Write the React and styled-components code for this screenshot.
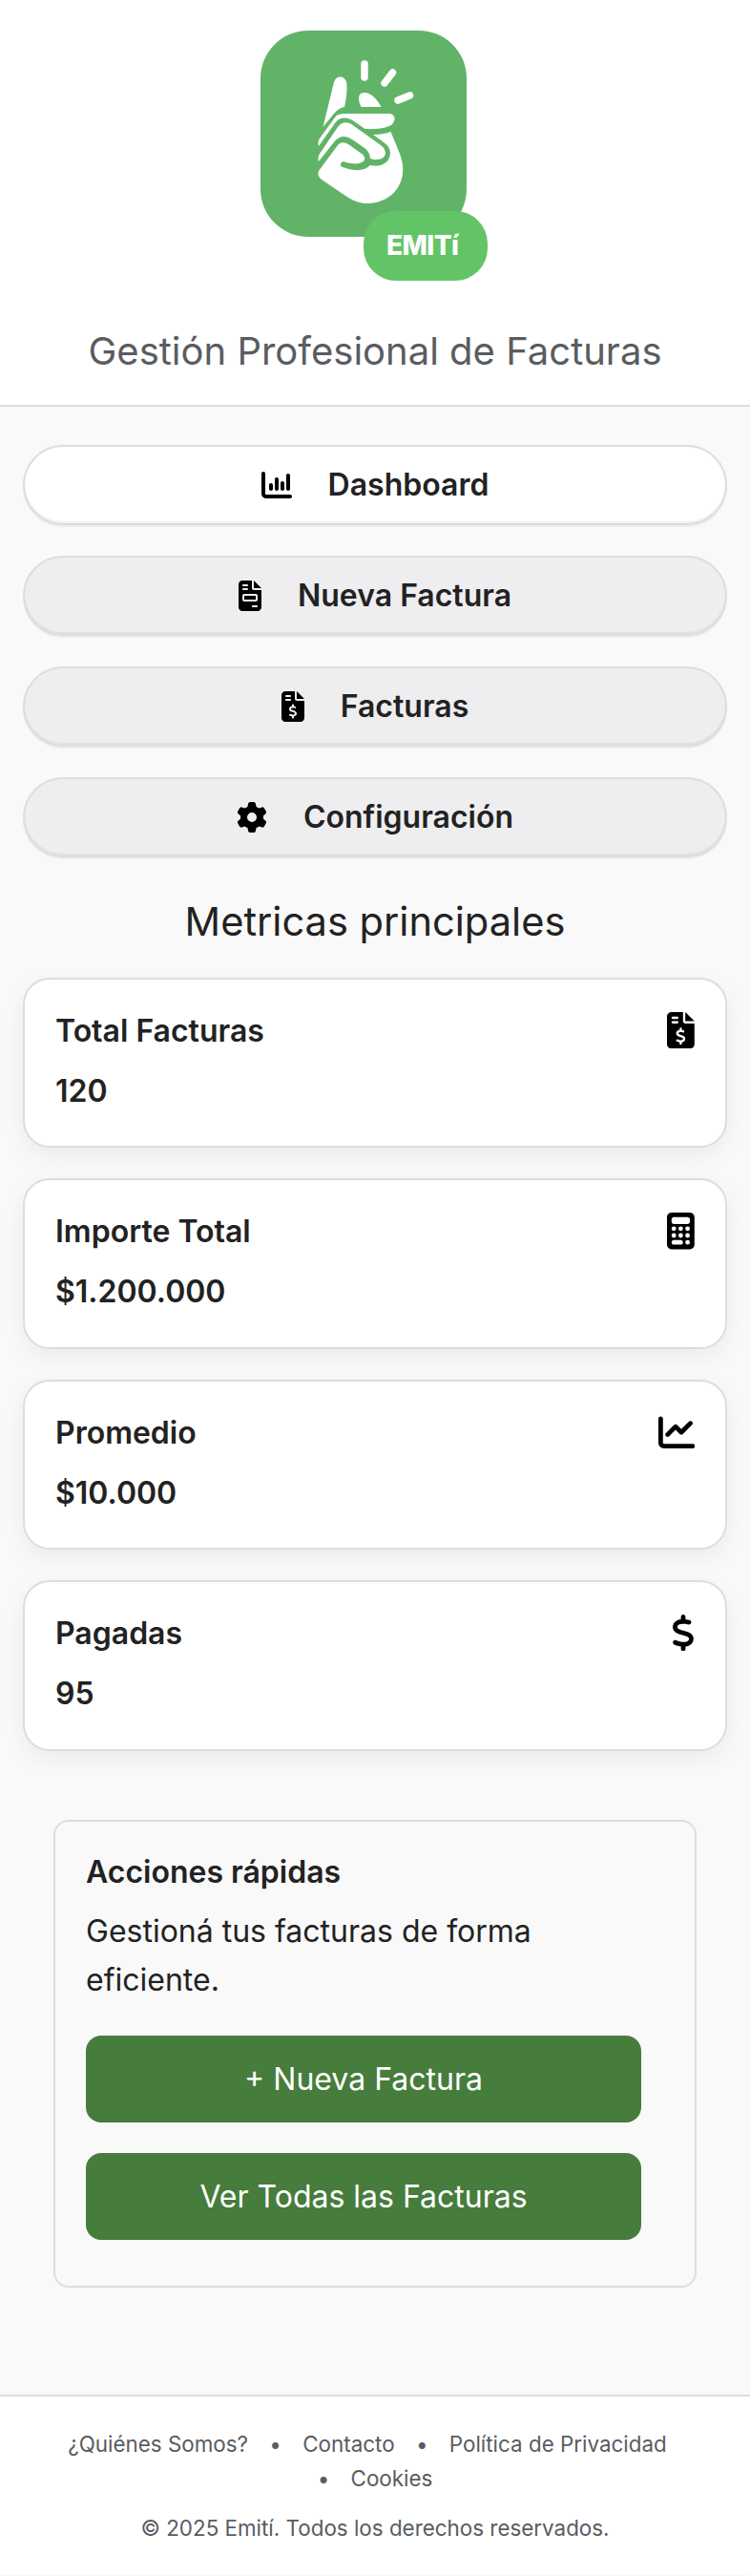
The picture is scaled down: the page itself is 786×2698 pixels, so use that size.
import React, { Fragment } from "react";
import styled, { createGlobalStyle } from "styled-components";
import {
  FaChartColumn,
  FaFileInvoice,
  FaFileInvoiceDollar,
  FaGear,
  FaCalculator,
  FaChartLine,
  FaDollarSign,
} from "react-icons/fa6";

const GlobalStyle = createGlobalStyle`
  *, *::before, *::after { box-sizing: border-box; }
  body {
    margin: 0;
    background: #f9f9f9;
    color: #222;
    font-family: Inter, "Liberation Sans", sans-serif;
    font-size: 32px;
  }
  h1, h2, h3, p, ul { margin: 0; padding: 0; }
`;

const Page = styled.div`
  display: flex;
  flex-direction: column;
  min-height: 2698px;
`;

const Header = styled.header`
  display: flex;
  flex-direction: column;
  align-items: center;
  height: 426px;
  padding-top: 28px;
  background: #fff;
  border-bottom: 2px solid #ddd;
`;

const Logo = styled.svg`
  display: block;
  width: 246px;
  height: 272px;
`;

const Tagline = styled.h1`
  margin-top: 44px;
  color: #5a5c60;
  font-size: 40px;
  font-weight: 400;
  line-height: 48px;
`;

const Main = styled.main`
  display: flex;
  flex-direction: column;
  padding: 40px 24px 0;
`;

const Nav = styled.nav`
  display: flex;
  flex-direction: column;
  gap: 32px;
`;

const NavButton = styled.button`
  display: flex;
  align-items: center;
  justify-content: center;
  gap: 38px;
  height: 84px;
  padding: 0;
  border: 2px solid #ddd;
  border-radius: 42px;
  background: ${({ $active }) => ($active ? "#fff" : "#eeeef0")};
  box-shadow: 0 2px 0 rgba(0, 0, 0, 0.05), inset 0 -2px 0 rgba(0, 0, 0, 0.05);
  color: #222;
  font: inherit;
  font-weight: 600;
`;

const NavLabel = styled.span`
  margin-bottom: 1px;
`;

/* $ratio is the glyph's width relative to its height */
const IconBox = styled.span`
  display: flex;
  flex: none;
  width: ${({ $size, $ratio = 1 }) => $size * $ratio}px;
  height: ${({ $size }) => $size}px;
  color: #000;

  svg {
    width: 100%;
    height: 100%;
  }
`;

const SectionTitle = styled.h2`
  margin-top: 41px;
  font-size: 41.6px;
  font-weight: 400;
  line-height: 52px;
  text-align: center;
`;

const Metrics = styled.section`
  display: flex;
  flex-direction: column;
  gap: 32px;
  margin-top: 33px;
`;

const Card = styled.article`
  height: 178.4px;
  padding: 32px;
  border: 2px solid #ddd;
  border-radius: 28px;
  background: #fff;
  box-shadow: 0 8px 24px rgba(0, 0, 0, 0.06);
  font-weight: 600;
`;

const CardHead = styled.div`
  display: flex;
  align-items: center;
  justify-content: space-between;
  height: 42px;
`;

const CardTitle = styled.h3`
  padding-top: 1px;
  font-size: 32px;
  font-weight: 600;
`;

const CardValue = styled.p`
  margin-top: 23px;
  line-height: 40px;
`;

const Actions = styled.section`
  height: 490px;
  margin: 72px 32px 0;
  padding: 32px;
  border: 2px solid #ddd;
  border-radius: 16px;
`;

const ActionsTitle = styled.h3`
  font-size: 32px;
  font-weight: 600;
  line-height: 41.6px;
`;

const ActionsText = styled.p`
  margin-top: 16px;
  line-height: 51.2px;
`;

const ActionList = styled.div`
  display: flex;
  flex-direction: column;
  gap: 32px;
  width: 582px;
  margin-top: 32px;
`;

const ActionButton = styled.button`
  height: 91.2px;
  padding: 0;
  border: 0;
  border-radius: 16px;
  background: #467c3c;
  color: #fff;
  font: inherit;
`;

const Footer = styled.footer`
  height: 189px;
  margin-top: 112.4px;
  padding-top: 32px;
  border-top: 2px solid #ddd;
  background: #fff;
  color: #5a5c60;
  font-size: 22.4px;
  line-height: 36px;
  text-align: center;
`;

const FooterLinks = styled.nav`
  padding: 0 64px;
`;

const FooterLink = styled.span`
  margin-right: 16px;
  white-space: nowrap;

  &:last-child {
    margin-right: 0;
  }
`;

const Separator = styled.span`
  margin-right: 16px;
`;

const Copyright = styled.p`
  margin-top: 16px;
`;

const NAV = [
  { label: "Dashboard", icon: FaChartColumn, active: true },
  { label: "Nueva Factura", icon: FaFileInvoice, ratio: 0.75 },
  { label: "Facturas", icon: FaFileInvoiceDollar, ratio: 0.75 },
  { label: "Configuración", icon: FaGear },
];

const METRICS = [
  { label: "Total Facturas", value: "120", icon: FaFileInvoiceDollar, ratio: 0.75 },
  { label: "Importe Total", value: "$1.200.000", icon: FaCalculator, ratio: 0.75 },
  { label: "Promedio", value: "$10.000", icon: FaChartLine },
  { label: "Pagadas", value: "95", icon: FaDollarSign, ratio: 0.625 },
];

const LINKS = ["¿Quiénes Somos?", "Contacto", "Política de Privacidad", "Cookies"];

function EmitiLogo() {
  return (
    <Logo viewBox="270 28 246 272" role="img" aria-label="Emití">
      <rect x="273" y="32" width="216" height="216" rx="50" fill="#61b467" />
      <g fill="#fff">
        <path d="M338.5 133 L350 86 C352.500 78 362.500 79 363.500 88 C364 97 362.500 105 361 112 Q355 113 350 119 Z" />
        <path d="M378.500 112 C374 103 375.500 97 382 97 C389 97 395 104 399.500 112 Z" />
        <path d="M355 120 Q358 119 362 119 H409 C416 121 414.500 129 408 132 C401 135 391 135.500 382.500 135 L371 127 C364 122 356 122 351 129 L334 153 Q332.500 149 335 145 L351 123 Q353 120 355 120 Z" />
        <path d="M334 169 Q332.500 165 335 161 L354 133 Q361 124 371 132 L399 152 C407 158 405 167 395 167 Q391 167.500 388 166 Q388 160 382 155 L369 146 Q358 139 350 149 Z" />
        <path d="M334 179 L354 152 Q358 147 365 151 L379 161 C388 168 377 175 361 169.500 A2.800 2.800 0 0 0 359 175 C374 180 382 179 388 173 C401 176 409 169 409 160 Q409 154 402 149 L391 141 Q402 141 409.500 138 L419 161 C430 189 412 213 385 213 Q375 213 365 207 L337 188 Q332 184 334 179 Z" />
      </g>
      <g stroke="#fff" strokeWidth="7.500" strokeLinecap="round">
        <path d="M382 67 V81" />
        <path d="M411.500 76 L403 87" />
        <path d="M429.500 100 L417 105" />
      </g>
      <rect x="381" y="221" width="130" height="73" rx="34" fill="#62c466" />
      <text
        x="405"
        y="266.500"
        fill="#fff"
        fontFamily="Inter, sans-serif"
        fontSize="28"
        fontWeight="800"
        textLength="76"
      >
        EMITí
      </text>
    </Logo>
  );
}

export default function App() {
  return (
    <Page>
      <GlobalStyle />
      <Header>
        <EmitiLogo />
        <Tagline>Gestión Profesional de Facturas</Tagline>
      </Header>
      <Main>
        <Nav>
          {NAV.map(({ label, icon: Icon, ratio, active }) => (
            <NavButton key={label} $active={active}>
              <IconBox $size={32} $ratio={ratio}>
                <Icon />
              </IconBox>
              <NavLabel>{label}</NavLabel>
            </NavButton>
          ))}
        </Nav>
        <SectionTitle>Metricas principales</SectionTitle>
        <Metrics>
          {METRICS.map(({ label, value, icon: Icon, ratio }) => (
            <Card key={label}>
              <CardHead>
                <CardTitle>{label}</CardTitle>
                <IconBox $size={38.4} $ratio={ratio}>
                  <Icon />
                </IconBox>
              </CardHead>
              <CardValue>{value}</CardValue>
            </Card>
          ))}
        </Metrics>
        <Actions>
          <ActionsTitle>Acciones rápidas</ActionsTitle>
          <ActionsText>Gestioná tus facturas de forma eficiente.</ActionsText>
          <ActionList>
            <ActionButton>+ Nueva Factura</ActionButton>
            <ActionButton>Ver Todas las Facturas</ActionButton>
          </ActionList>
        </Actions>
      </Main>
      <Footer>
        <FooterLinks>
          {LINKS.map((link, i) => (
            <Fragment key={link}>
              {i > 0 && (
                <>
                  {" "}
                  <Separator>•</Separator>{" "}
                </>
              )}
              <FooterLink>{link}</FooterLink>
            </Fragment>
          ))}
        </FooterLinks>
        <Copyright>© 2025 Emití. Todos los derechos reservados.</Copyright>
      </Footer>
    </Page>
  );
}
